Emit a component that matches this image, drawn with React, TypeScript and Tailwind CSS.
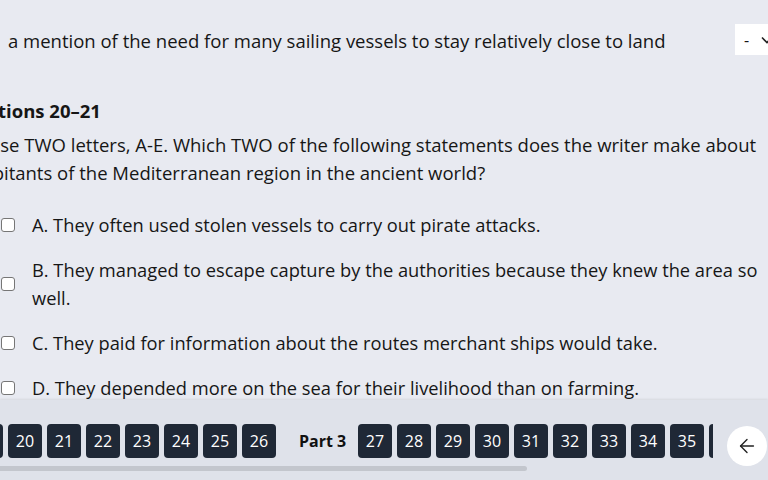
import React from "react";
import { ArrowLeft } from "lucide-react";

const font = { fontFamily: '"Open Sans", "Noto Sans", sans-serif' };

function Checkbox() {
  return <span className="block w-[14px] h-[14px] shrink-0 rounded-[3px] border border-[#767676] bg-white" />;
}

const options = [
  "A. They often used stolen vessels to carry out pirate attacks.",
  "B. They managed to escape capture by the authorities because they knew the area so well.",
  "C. They paid for information about the routes merchant ships would take.",
  "D. They depended more on the sea for their livelihood than on farming.",
];

export default function App() {
  const part2 = [19, 20, 21, 22, 23, 24, 25, 26];
  const part3 = [27, 28, 29, 30, 31, 32, 33, 34, 35, 36, 37];
  return (
    <div className="w-[768px] h-[480px] overflow-hidden flex flex-col bg-[#e8eaf1] text-[#161616]" style={font}>
      <div className="h-[400px] overflow-hidden shrink-0">
        <div className="pt-[24px] flex items-center">
          <div className="pl-2 text-[18.5px] leading-[28px] flex-1 pt-[3px]">a mention of the need for many sailing vessels to stay relatively close to land</div>
          <div className="w-[44px] h-[31px] mr-[-11px] bg-white shrink-0 flex items-center pl-[9px] gap-[12px] text-[16px]">
            <span className="leading-none">-</span>
            <svg width="12" height="8" viewBox="0 0 12 8" fill="none" stroke="#222" strokeWidth="1.6">
              <path d="M1 1.5 L6 6.5 L11 1.5" />
            </svg>
          </div>
        </div>
        <div className="ml-[-45px] mt-[42px]">
          <div className="ml-[-4px] text-[18.5px] leading-[28px] font-bold">Questions 20–21</div>
          <div className="mt-[6px] text-[18.5px] leading-[28px] w-[812px]">
            Choose TWO letters, A-E. Which TWO of the following statements does the writer make about inhabitants of the Mediterranean region in the ancient world?
          </div>
          <div className="mt-[24px] flex flex-col gap-[17px] pl-[46px] pr-[0px] w-[812px]">
            {options.map((o) => (
              <div key={o} className="flex items-center gap-[17px]">
                <Checkbox />
                <div className="text-[18.3px] leading-[28px]">{o}</div>
              </div>
            ))}
          </div>
        </div>
      </div>
      <div className="h-[80px] bg-[#dfe2ea] shadow-[0_-1px_2px_rgba(0,0,0,0.08)] flex items-start">
        <div className="w-[713px] overflow-hidden shrink-0 pt-[24px]">
          <div className="flex items-center gap-[5px] ml-[-31px]">
            {part2.map((n) => (
              <div key={n} className="w-[34px] h-[34px] shrink-0 rounded-[4px] bg-[#1f2836] text-white text-[16px] flex items-center justify-center">{n}</div>
            ))}
            <div className="w-[72px] shrink-0 pl-[18px] text-[16px] font-bold text-[#111]">Part 3</div>
            {part3.map((n) => (
              <div key={n} className="w-[34px] h-[34px] shrink-0 rounded-[4px] bg-[#1f2836] text-white text-[16px] flex items-center justify-center">{n}</div>
            ))}
          </div>
          <div className="mt-[8px] h-[5px] w-[527px] rounded-r-full bg-[#c3c6cd]" />
        </div>
        <div className="mt-[26px] ml-[14px] w-[40px] h-[40px] rounded-full bg-white flex items-center justify-center shrink-0">
          <ArrowLeft size={22} strokeWidth={1.5} color="#222" />
        </div>
      </div>
    </div>
  );
}
